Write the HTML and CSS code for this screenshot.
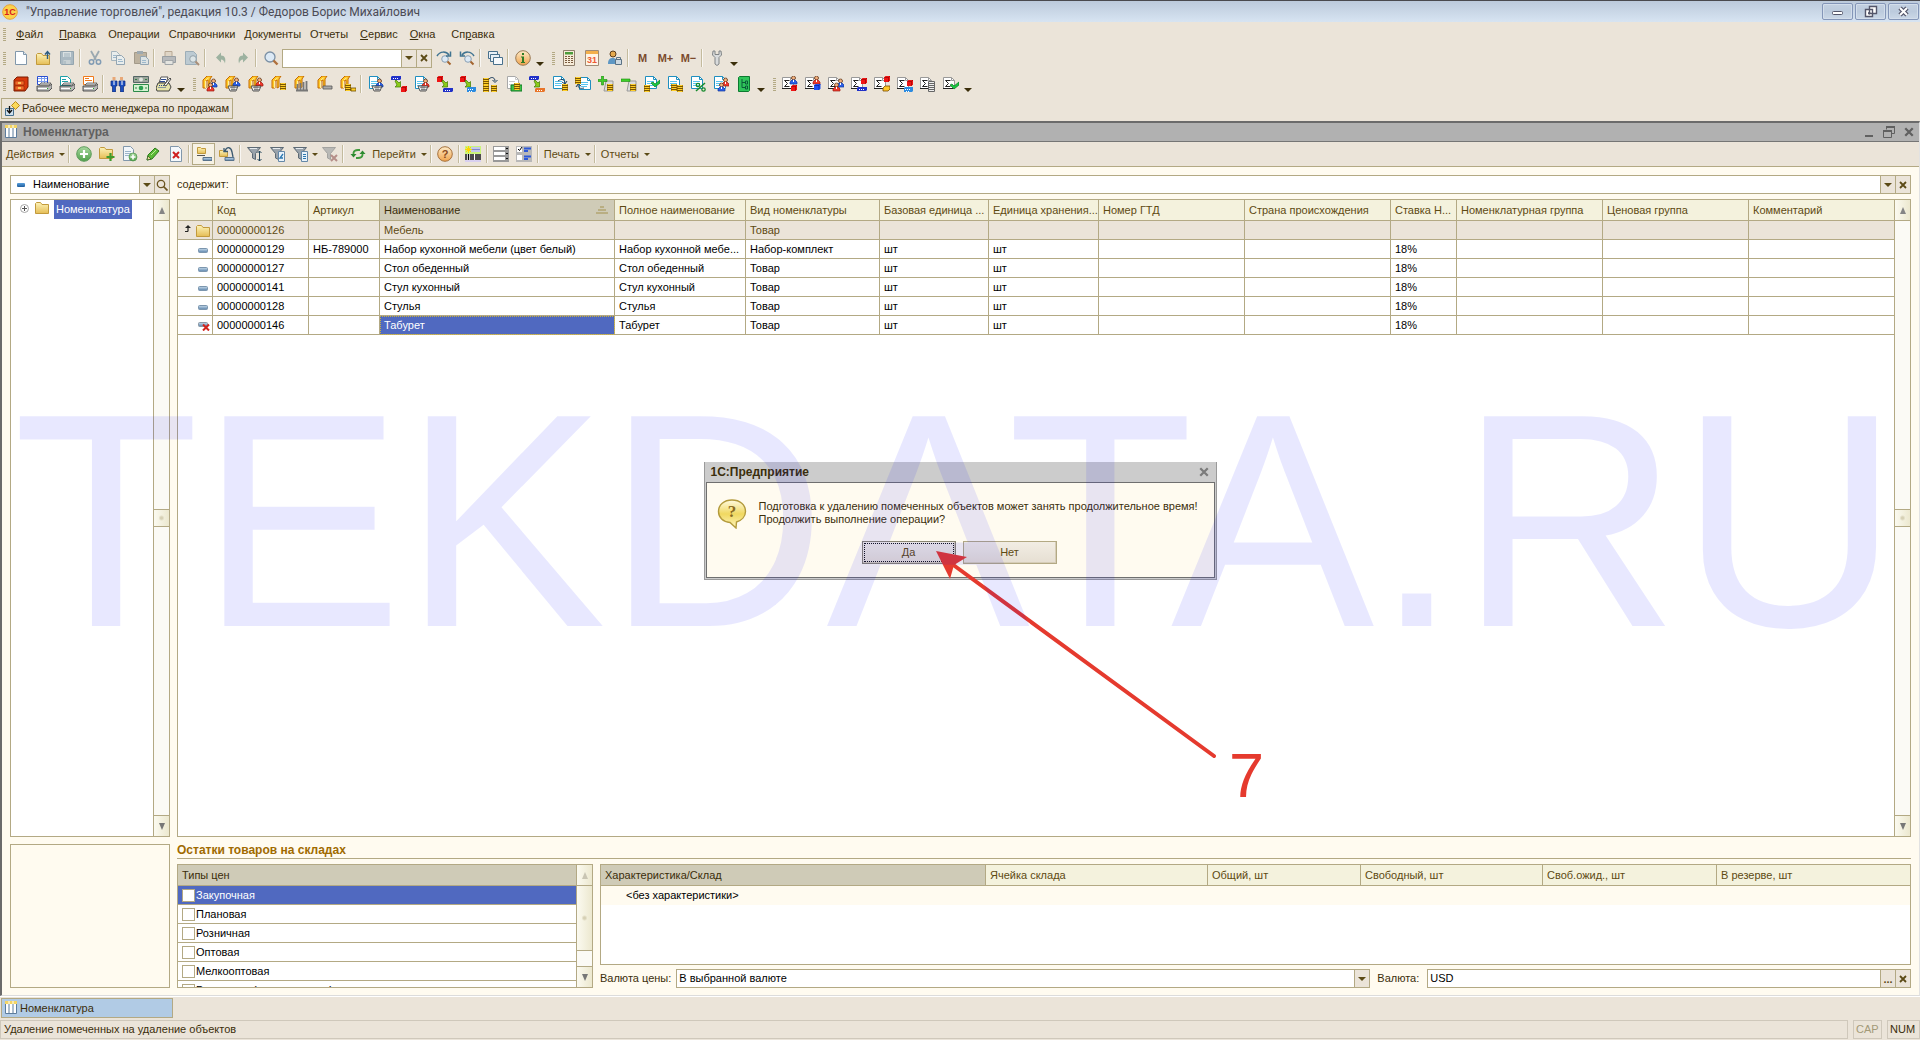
FILE: index.html
```html
<!DOCTYPE html>
<html lang="ru">
<head>
<meta charset="utf-8">
<title>Управление торговлей, редакция 10.3</title>
<link rel="stylesheet" href="styles.css">
</head>
<body>
<svg class="defs" aria-hidden="true">
<defs>
<linearGradient id="gFolder" x1="0" y1="0" x2="0" y2="1"><stop offset="0" stop-color="#fdf3b8"/><stop offset="1" stop-color="#e5bd55"/></linearGradient>
<linearGradient id="gGreen" x1="0" y1="0" x2="0" y2="1"><stop offset="0" stop-color="#a9d9a0"/><stop offset="1" stop-color="#4fa04b"/></linearGradient>
<linearGradient id="gOrange" x1="0" y1="0" x2="0" y2="1"><stop offset="0" stop-color="#fdebc8"/><stop offset="1" stop-color="#f0a24c"/></linearGradient>
<linearGradient id="gBar" x1="0" y1="0" x2="0" y2="1"><stop offset="0" stop-color="#c8dcec"/><stop offset="1" stop-color="#5b83ab"/></linearGradient>
<linearGradient id="gYellow" x1="0" y1="0" x2="0" y2="1"><stop offset="0" stop-color="#fffbe0"/><stop offset=".5" stop-color="#f0d860"/><stop offset="1" stop-color="#fff6c0"/></linearGradient>
<g id="pDoc"><path d="M1.5 .5h8l3 3v9h-11z" fill="#fff" stroke="#1f8fc0"/><path d="M9.500 .5v3h3" fill="none" stroke="#1f8fc0"/><path d="M3 5.500h7M3 7.500h7M3 9.500h6" stroke="#58c4ee"/></g>
<g id="pGDoc"><path d="M1.500 .5h8l3 3v9h-11z" fill="#fff" stroke="#a9a9a9"/><path d="M9.500 .5v3h3M3 5.500h6M3 8.500h6" fill="none" stroke="#c9c9c9"/></g>
<g id="pSum"><path d="M.5 1.500h8l3 3v8h-11z" fill="#fff" stroke="#999"/><path d="M8.500 1.500v3h3" fill="none" stroke="#999"/><path d="M0 12.500h10" stroke="#222"/><path d="M7.500 4.500h-5l3 3-3 3h5" fill="none" stroke="#222"/></g>
<g id="pCoins"><path d="M0 1h6v7h-6z" fill="#7a5600"/><path d="M.5 1.500h5M.5 3.500h5M.5 5.500h5M.5 7.500h5" stroke="#ffcf2a" stroke-width="1.200"/></g>
<g id="pManB"><path d="M2.500 0h2v1h1v2h-1v1h-2v-1h-1v-2h1z" fill="#f2b07c" stroke="#5c3317" stroke-width=".6"/><path d="M0 8v-2l2-2h3l2 2v2z" fill="#2a5fe8" stroke="#123a9c" stroke-width=".7"/><path d="M3.500 4v2" stroke="#fff"/></g>
<g id="pManR"><path d="M2.500 0h2v1h1v2h-1v1h-2v-1h-1v-2h1z" fill="#f2b07c" stroke="#5c3317" stroke-width=".6"/><path d="M0 8v-2l2-2h3l2 2v2z" fill="#ee3a2c" stroke="#9c1a12" stroke-width=".7"/><path d="M3.500 4v2" stroke="#fff"/></g>
<g id="pArch"><path d="M1 12V4l4-4h5l-2 3v8l-2 1V4l-2 1v7z" fill="#ffc928" stroke="#c56a00"/><path d="M3.500 12V5M6.500 2L4 4" stroke="#fff0a0" fill="none"/></g>
<g id="pBasket"><path d="M0 0h10l-2 5h-6z" fill="#efefef" stroke="#333" stroke-width=".8"/><path d="M2 1.500h7M3 3.500h5M4 0v5M6 0v5" stroke="#555" stroke-width=".6"/></g>
<g id="pCubeR"><path d="M0 1.500l1.500-1.500h4.500v4.500l-1.500 1.500h-4.500z" fill="#f01414"/><path d="M4.500 6V1.500H0M4.500 1.500L6 0" stroke="#8e0000" stroke-width=".6" fill="none"/></g>
<g id="pCubeB"><path d="M0 1.500l1.500-1.500h5v4.500l-1.500 1.500h-5z" fill="#1f50f0"/><path d="M5 6V1.500H0M5 1.500L6.500 0" stroke="#001a8e" stroke-width=".6" fill="none"/></g>
<g id="pBarB"><path d="M0 1l1-1h9v3l-1 1h-9z" fill="#2030c8"/><path d="M2 2.500h1M4 2.500h1M6 2.500h1" stroke="#fff"/></g>
<g id="pBarL"><path d="M0 1l1-1h8v4l-1 1h-8z" fill="#2c8be0"/><path d="M1 2.500h6M2 4.500h4" stroke="#fff" stroke-dasharray="1 1"/></g>
<g id="pBarO"><path d="M0 1l1-1h9v3l-1 1h-9z" fill="#e8752a"/><path d="M2 2.500h1M4 2.500h1M6 2.500h1" stroke="#fff"/></g>
<g id="pArrow"><path d="M0 1l1-1 3 3 1.500-1.500v5.500h-5.500l2-2z" fill="#8ccc1a" stroke="#3d7a00" stroke-width=".7"/></g>
<g id="pPrinter"><path d="M2 2l2-2h10l-2 2z" fill="#ddd" stroke="#444" stroke-width=".7"/><path d="M0 3h12l3-2v4l-3 3h-12z" fill="#b8b8b8" stroke="#333" stroke-width=".8"/><path d="M1 5.500h10" stroke="#fff"/><path d="M10 5.500h1" stroke="#2a2"/></g>
<g id="pCheck"><path d="M0 3l2-1 2 2 5-4v3l-5 4z" fill="#18c840" stroke="#0a7a22" stroke-width=".7"/></g>
<g id="pLens"><circle cx="4" cy="4" r="3.300" fill="#dceaf6" stroke="#8aa0b4"/><path d="M6.500 6.500l3 3" stroke="#a3642f" stroke-width="2"/></g>
<g id="pFolder"><path d="M.5 2.500l1-1h4l1.500 2h6.500v9h-13z" fill="url(#gFolder)" stroke="#c29a3c"/></g>
<g id="pFunnel"><path d="M.5 1.500h13l-5 6v6l-3-1.500v-4.500z" fill="#9aa3ab" stroke="#5d6a75"/><path d="M3 2.500h7" stroke="#e6ebef"/></g>
<g id="pPlus"><circle cx="4" cy="4" r="4" fill="url(#gGreen)" stroke="#4a9347" stroke-width=".7"/><path d="M4 1.500v5M1.500 4h5" stroke="#fff" stroke-width="1.600"/></g>
<g id="pX"><path d="M1 1l6 6M7 1l-6 6" stroke="#cf1f1f" stroke-width="2"/></g>
</defs>
<symbol id="logo" viewBox="0 0 16 16"><circle cx="8" cy="8" r="7.300" fill="#fbd24a" stroke="#e8a33c"/><text x="8" y="11" text-anchor="middle" font-size="9" font-weight="700" fill="#d8201c">1С</text></symbol>
<symbol id="new" viewBox="0 0 16 16"><path d="M2.500 1.500h8l3 3v10h-11z" fill="#fdfeff" stroke="#8197ab"/><path d="M10.500 1.500v3h3" fill="#dbe6f0" stroke="#8197ab"/></symbol>
<symbol id="open" viewBox="0 0 16 16"><use href="#pFolder" y="2"/><path d="M11.500 9V2M9 4.500L11.500 1.500 14 4.500" fill="none" stroke="#2d5d80" stroke-width="1.400"/></symbol>
<symbol id="save" viewBox="0 0 16 16"><path d="M1.500 1.500h13v13h-12l-1-1z" fill="#aab9c2" stroke="#94a5af"/><path d="M4 2h8v5H4z" fill="#d9e0e2"/><path d="M4.500 10h7v4h-7z" fill="#c8d1d4"/><path d="M5 4h6M5 6h6M6 11v3" stroke="#9eb0ba"/></symbol>
<symbol id="cut" viewBox="0 0 16 16"><path d="M4 1l5 9M12 1l-5 9" stroke="#9ba8b0" stroke-width="1.800"/><circle cx="4.500" cy="12" r="2.200" fill="none" stroke="#829cb4" stroke-width="1.500"/><circle cx="11.500" cy="12" r="2.200" fill="none" stroke="#829cb4" stroke-width="1.500"/></symbol>
<symbol id="copy" viewBox="0 0 16 16"><path d="M1.500 1.500h5l3 3v6h-8z" fill="#e9edec" stroke="#a5b4bd"/><path d="M6.500 5.500h5l3 3v6h-8z" fill="#e9edec" stroke="#93a5b2"/><path d="M3 5.500h3M3 7.500h3M8 9.500h4M8 11.500h5" stroke="#9db8cc"/></symbol>
<symbol id="paste" viewBox="0 0 16 16"><path d="M1.500 2.500h12v11h-12z" fill="#bdb29f" stroke="#a39a8a"/><path d="M4 1h6v3H4z" fill="#9ea9b0"/><path d="M7.500 6.500h5l3 3v5h-8z" fill="#dde3e4" stroke="#93a5b2"/><path d="M9 10.500h4M9 12.500h4" stroke="#9db8cc"/></symbol>
<symbol id="print" viewBox="0 0 16 16"><path d="M4 1.500h7v5H4z" fill="#dfd5c6" stroke="#b8a894"/><path d="M1.500 6.500h13v6h-13z" fill="#b7b9bb" stroke="#999fa3"/><path d="M4 10.500h8v4H4z" fill="#e4e4e0" stroke="#a0a5a8"/></symbol>
<symbol id="preview" viewBox="0 0 16 16"><path d="M1.500 1.500h8l3 3v10h-11z" fill="#bccad2" stroke="#9cadb7"/><circle cx="9" cy="9" r="3.300" fill="#dce4e6" stroke="#94a2aa"/><path d="M11.500 11.500l3.500 3.500" stroke="#a98e78" stroke-width="2"/></symbol>
<symbol id="undo" viewBox="0 0 16 16"><path d="M4 7.500l5-5v3c4 0 5 3 4 8-1-3-2-4-4-4v3z" fill="#9db2a0"/></symbol>
<symbol id="redo" viewBox="0 0 16 16"><path d="M13 7.500l-5-5v3c-4 0-5 3-4 8 1-3 2-4 4-4v3z" fill="#9db2a0"/></symbol>
<symbol id="find" viewBox="0 0 16 16"><circle cx="7" cy="7" r="5" fill="#dce9f5" stroke="#7b90a5" stroke-width="1.300"/><path d="M10.500 10.500l4 4" stroke="#b0703c" stroke-width="2.400"/></symbol>
<symbol id="findnext" viewBox="0 0 16 16"><use href="#pLens" x="5" y="5"/><path d="M1 6c3-5 9-5 12-1M14.500 1.500v4.500h-4.500" fill="none" stroke="#3f7391" stroke-width="1.500"/></symbol>
<symbol id="findprev" viewBox="0 0 16 16"><use href="#pLens" x="5" y="5"/><path d="M15 6c-3-5-9-5-12-1M1.500 1.500v4.500h4.500" fill="none" stroke="#3f7391" stroke-width="1.500"/></symbol>
<symbol id="windows" viewBox="0 0 16 16"><path d="M1.500 1.500h9v7h-9z" fill="#e9f0f6" stroke="#48708c"/><path d="M3.500 4.500h9v7h-9z" fill="#e9f0f6" stroke="#48708c"/><path d="M6.500 7.500h9v7h-9z" fill="#f6f9fc" stroke="#48708c"/></symbol>
<symbol id="info" viewBox="0 0 16 16"><circle cx="8" cy="8" r="7.300" fill="url(#gOrange)" stroke="#9a7a54"/><path d="M7 3h2v2H7zM6 6.500h3V12h1v1H6v-1h1V7.500H6z" fill="#2f7d26"/></symbol>
<symbol id="calc" viewBox="0 0 16 16"><path d="M2.500 .5h11v15h-11z" fill="#f7ecd9" stroke="#8f7f6c"/><path d="M4 2h8v2.500H4z" fill="#4c9c3c"/><path d="M4 6.500h8M4 8.500h8M4 10.500h8M4 12.500h8" stroke="#7a5b40" stroke-dasharray="2 1"/></symbol>
<symbol id="calendar" viewBox="0 0 16 16"><path d="M1.500 .5h13v15h-13z" fill="#fff5e6" stroke="#a08b76"/><path d="M2 1h12v3H2z" fill="#f4b04c"/><text x="8" y="13" text-anchor="middle" font-size="9" font-weight="700" fill="#ec5a33">31</text></symbol>
<symbol id="userlock" viewBox="0 0 16 16"><circle cx="6" cy="4" r="3" fill="#e5a94d" stroke="#5a3b1a"/><path d="M1 14c0-5 2-6 5-6s4 2 4 6z" fill="#5e97c4"/><path d="M8.500 9.500h6v5h-6z" fill="#cdd9e2" stroke="#5b7284"/><path d="M9.500 9V7.500h4V9" fill="none" stroke="#5b7284"/></symbol>
<symbol id="wrench" viewBox="0 0 16 16"><path d="M4 1L3.500 5l2.500 2.500V14l2 1.500 2-1.500V7.500L12.500 5 12 1l-2 0v3.500H6V1z" fill="#d9dbdc" stroke="#808486"/></symbol>
<symbol id="cabinet" viewBox="0 0 16 16"><path d="M1 4l3-3h11v10l-3 4H1z" fill="#d8390c" stroke="#7a1c00"/><path d="M2 5h9v4H2zM2 10h9v4H2z" fill="#f2682a" stroke="#8a2500" stroke-width=".6"/><path d="M5 7h3M5 12h3" stroke="#ffe070" stroke-width="1.500"/></symbol>
<symbol id="prn1" viewBox="0 0 16 16"><path d="M1.500 .5h10v8h-10z" fill="#fff" stroke="#2a4fd0"/><path d="M2 2.500h9M2 5.500h9M5.500 1v7M8.500 1v7" stroke="#7a9cf0"/><use href="#pPrinter" x="1" y="7"/></symbol>
<symbol id="prn2" viewBox="0 0 16 16"><path d="M1.500 .5h7l3 3v6h-10z" fill="#fff" stroke="#1ba0a8"/><path d="M3 3.500h4M3 5.500h6" stroke="#1ba0a8"/><use href="#pPrinter" x="1" y="7"/></symbol>
<symbol id="prn3" viewBox="0 0 16 16"><path d="M1.500 .5h10v8h-10z" fill="#fff" stroke="#f07a1c"/><path d="M3 2.500h4M3 4.500h7" stroke="#f07a1c"/><use href="#pPrinter" x="1" y="7"/></symbol>
<symbol id="men" viewBox="0 0 16 16"><path d="M2.500 1h3v3h-3zM10 1h3v3h-3z" fill="#e8a878"/><path d="M1 5h6v5H5.500v6h-3v-6H1zM9 5h6v5h-1.500v6h-3v-6H9z" fill="#1c4fc0" stroke="#0c2a78" stroke-width=".7"/><path d="M4 5v4M12 5v4" stroke="#fff"/></symbol>
<symbol id="money" viewBox="0 0 16 16"><path d="M.5 .5h15v6H.5z" fill="#9aa49a" stroke="#566"/><path d="M.5 8.500h15v7H.5z" fill="#d6f2d2" stroke="#2c8a4a"/><circle cx="8" cy="12" r="2.300" fill="#2ba050"/><circle cx="8" cy="3.500" r="2" fill="#dfe5df"/><path d="M2 12h2M12 12h2M2 3.500h2M12 3.500h2" stroke="#367a46"/></symbol>
<symbol id="typewriter" viewBox="0 0 16 16"><path d="M5 1h7l-2 6H3z" fill="#fff" stroke="#555"/><path d="M5 3.500h5M4 5.500h5" stroke="#2a4890"/><path d="M2 7h11l2 4-2 4H1l-1-3z" fill="#e5e2a8" stroke="#444"/><path d="M3 9.500h8M2.500 11.500h8" stroke="#2a4890" stroke-dasharray="1 1"/><path d="M8 9l6-7 1 1-5 7z" fill="#fff" stroke="#222" stroke-width=".8"/></symbol>
<symbol id="a1" viewBox="0 0 16 16"><use href="#pArch"/><use href="#pManB" x="8" y="3"/><use href="#pManR" x="5" y="7"/></symbol>
<symbol id="a2" viewBox="0 0 16 16"><use href="#pArch"/><use href="#pManB" x="8" y="2"/><use href="#pBasket" x="3" y="10"/></symbol>
<symbol id="a3" viewBox="0 0 16 16"><use href="#pArch"/><use href="#pManR" x="8" y="2"/><use href="#pBasket" x="3" y="10"/></symbol>
<symbol id="a4" viewBox="0 0 16 16"><use href="#pArch"/><use href="#pCoins" x="9" y="6"/></symbol>
<symbol id="a5" viewBox="0 0 16 16"><use href="#pArch"/><path d="M3.500 14V8M6.500 14V7M9.500 14V6M12.500 14V5M2 14.500h12" stroke="#777" stroke-width="1.800"/></symbol>
<symbol id="a6" viewBox="0 0 16 16"><use href="#pArch"/><path d="M6 10h9v3H6z" fill="#aaa" stroke="#555" stroke-width=".8"/></symbol>
<symbol id="a7" viewBox="0 0 16 16"><use href="#pArch"/><use href="#pCoins" x="5" y="7"/><path d="M11 12h5v3h-5z" fill="#ffcf2a" stroke="#6b4a00" stroke-width=".8"/></symbol>
<symbol id="d1" viewBox="0 0 16 16"><use href="#pDoc"/><use href="#pManB" x="8" y="3"/><use href="#pBasket" x="4" y="10"/></symbol>
<symbol id="d2" viewBox="0 0 16 16"><use href="#pBarB"/><use href="#pArrow" x="4" y="4"/><use href="#pCubeR" x="10" y="10"/></symbol>
<symbol id="d3" viewBox="0 0 16 16"><use href="#pDoc"/><use href="#pManR" x="8" y="3"/><use href="#pBasket" x="4" y="10"/></symbol>
<symbol id="d4" viewBox="0 0 16 16"><use href="#pCubeR"/><use href="#pArrow" x="5" y="4"/><use href="#pBarB" x="6" y="12"/></symbol>
<symbol id="d5" viewBox="0 0 16 16"><use href="#pCubeR"/><use href="#pArrow" x="5" y="4"/><use href="#pBarL" x="7" y="11"/></symbol>
<symbol id="d6" viewBox="0 0 16 16"><use href="#pCoins" y="1"/><use href="#pCoins" y="8"/><use href="#pCoins" x="8" y="8"/><path d="M6 3c3-3 6-1 6 2M9.500 4l2.500 2.500L14.500 4" fill="none" stroke="#1c3c5c"/></symbol>
<symbol id="d7" viewBox="0 0 16 16"><use href="#pGDoc"/><path d="M5 9h11v6H5z" fill="#3fc04a" stroke="#117a22"/><use href="#pCoins" x="8" y="6"/></symbol>
<symbol id="d8" viewBox="0 0 16 16"><use href="#pBarB"/><use href="#pArrow" x="5" y="4"/><use href="#pBarO" x="6" y="12"/></symbol>
<symbol id="d9" viewBox="0 0 16 16"><use href="#pDoc"/><path d="M6 5c4-3 7-1 7 2M10 6l3 2 2-3" fill="none" stroke="#1c3c5c"/><use href="#pCoins" x="10" y="7"/></symbol>
<symbol id="d10" viewBox="0 0 16 16"><use href="#pDoc" x="3" y="1"/><use href="#pCoins"/><path d="M3 9c0 3 2 4 6 3M1 11l2-3 3 2" fill="none" stroke="#1c3c5c"/></symbol>
<symbol id="d11" viewBox="0 0 16 16"><path d="M8 5h7v10H6z" fill="#ddd" stroke="#999"/><use href="#pCoins" x="9" y="7"/><path d="M3.500 0h2v3.500H9v2H5.500V9h-2V5.500H0v-2h3.500z" fill="#3fcf2a" stroke="#178a0c" stroke-width=".6"/></symbol>
<symbol id="d12" viewBox="0 0 16 16"><path d="M8 5h7v10H6z" fill="#ddd" stroke="#999"/><use href="#pCoins" x="9" y="7"/><path d="M0 3h9v2.500H0z" fill="#3fcf2a" stroke="#178a0c" stroke-width=".6"/></symbol>
<symbol id="d13" viewBox="0 0 16 16"><use href="#pDoc"/><use href="#pCheck" x="7" y="4"/><use href="#pCoins" y="8"/></symbol>
<symbol id="d14" viewBox="0 0 16 16"><use href="#pDoc"/><use href="#pCoins" x="4" y="7"/><use href="#pCoins" x="10" y="8"/></symbol>
<symbol id="d15" viewBox="0 0 16 16"><use href="#pDoc"/><path d="M6 15l9-8" stroke="#178a2c" stroke-width="1.500"/><circle cx="8" cy="9" r="1.700" fill="none" stroke="#178a2c" stroke-width="1.300"/><circle cx="13.500" cy="13.500" r="1.700" fill="none" stroke="#178a2c" stroke-width="1.300"/></symbol>
<symbol id="d16" viewBox="0 0 16 16"><use href="#pDoc"/><use href="#pManR" x="9" y="2"/><use href="#pManB" x="5" y="7"/></symbol>
<symbol id="d17" viewBox="0 0 16 16"><path d="M2.500 1.500l1-1h10v14l-1 1h-10z" fill="#2fc45a" stroke="#0c7a30"/><path d="M6 3v8.500h3M6 6.500h3M9.500 5h2v3h-2zM9.500 10h2v3h-2z" fill="none" stroke="#0a5c38"/></symbol>
<symbol id="s1" viewBox="0 0 16 16"><use href="#pSum"/><use href="#pManB" x="8"/><use href="#pCubeR" x="9" y="9"/></symbol>
<symbol id="s2" viewBox="0 0 16 16"><use href="#pSum"/><use href="#pManR" x="8"/><use href="#pCubeB" x="9" y="8"/></symbol>
<symbol id="s3" viewBox="0 0 16 16"><use href="#pSum"/><use href="#pManB" x="9" y="3"/><use href="#pManR" x="5" y="7"/></symbol>
<symbol id="s4" viewBox="0 0 16 16"><use href="#pSum"/><use href="#pCubeR" x="10" y="2"/><use href="#pBarB" x="6" y="11"/></symbol>
<symbol id="s5" viewBox="0 0 16 16"><use href="#pSum"/><use href="#pCubeR" x="10"/><path d="M9 12l2-2h5v3l-2 2H9z" fill="#ffc928" stroke="#7a4a00" stroke-width=".8"/></symbol>
<symbol id="s6" viewBox="0 0 16 16"><use href="#pSum"/><use href="#pCubeR" x="10" y="4"/><use href="#pBarL" x="7" y="11"/></symbol>
<symbol id="s7" viewBox="0 0 16 16"><use href="#pSum"/><path d="M8.500 5.500h6v10h-6z" fill="#eee" stroke="#666"/><path d="M8 7.500h7M8 9.500h7M8 11.500h7M8 13.500h7" stroke="#666"/></symbol>
<symbol id="s8" viewBox="0 0 16 16"><use href="#pSum"/><use href="#pCheck" x="7" y="6"/></symbol>
<symbol id="workplace" viewBox="0 0 16 16"><path d="M1.500 7.500h8v7h-8z" fill="#cfe0ee" stroke="#47708f"/><path d="M5.500 5v6M3 9l2.500 3L8 9" fill="none" stroke="#111" stroke-width="1.300"/><path d="M11.500 .5l4 4-4 4-4-4z" fill="#fbd95a" stroke="#b98a1c"/></symbol>
<symbol id="grid" viewBox="0 0 16 16"><path d="M2.500 2.500h11v11h-11z" fill="#fff" stroke="#5c7c9c"/><path d="M6 2v11.500M10 2v11.500" stroke="#5c7c9c"/><path d="M2 1h12v3H2z" fill="#f3d464"/><path d="M6 1v3M10 1v3" stroke="#fff"/></symbol>
<symbol id="add" viewBox="0 0 16 16"><circle cx="8" cy="8" r="7.300" fill="url(#gGreen)" stroke="#5f9c5c"/><path d="M8 4v8M4 8h8" stroke="#fff" stroke-width="2.200"/></symbol>
<symbol id="addfolder" viewBox="0 0 16 16"><use href="#pFolder"/><path d="M11.500 7v8M7.500 11h8" stroke="#3f9a2c" stroke-width="2.200"/></symbol>
<symbol id="adddoc" viewBox="0 0 16 16"><path d="M1.500 .5h7l3 3v11h-10z" fill="#f2f6fa" stroke="#8197ab"/><path d="M3 5.500h6M3 7.500h6M3 9.500h4" stroke="#9bb4c9"/><use href="#pPlus" x="7" y="7"/></symbol>
<symbol id="edit" viewBox="0 0 16 16"><path d="M2 14l1-5 7-7 4 3-7 8z" fill="#5cbb36" stroke="#2c7a1c"/><path d="M2 14l1-4 3 3z" fill="#f0d8a0" stroke="#2c5a1c" stroke-width=".7"/><path d="M6 9l5-5" stroke="#bdeb9c"/></symbol>
<symbol id="delete" viewBox="0 0 16 16"><path d="M2.500 .5h8l3 3v12h-11z" fill="#f4f8fc" stroke="#8197ab"/><use href="#pX" x="4" y="5"/></symbol>
<symbol id="hier" viewBox="0 0 16 16"><path d="M1.500 1.500h3l1 1h4v5h-8z" fill="url(#gFolder)" stroke="#c29a3c"/><path d="M1 9.500h8" stroke="#555"/><path d="M7 14.500h9v-3H7z" fill="url(#gBar)" stroke="#58738c"/></symbol>
<symbol id="move" viewBox="0 0 16 16"><path d="M.5 4.500h3l1 1h4v5h-8z" fill="url(#gFolder)" stroke="#c29a3c"/><path d="M6 5c2-5 6-4 7 1l1 5M5 2v3.500h4" fill="none" stroke="#3c5a70" stroke-width="1.300"/><path d="M6 11.500h9v3H6z" fill="url(#gBar)" stroke="#58738c"/></symbol>
<symbol id="f1" viewBox="0 0 16 16"><use href="#pFunnel"/><path d="M12.500 5v10M10.500 7l2-2 2 2M10.500 13l2 2 2-2" fill="none" stroke="#24475c"/></symbol>
<symbol id="f2" viewBox="0 0 16 16"><use href="#pFunnel"/><path d="M8.500 5.500h6v10h-6z" fill="#e9f2fa" stroke="#6488a8"/><path d="M13 8l-3 4h3" fill="none" stroke="#2c78b0" stroke-width="1.300"/></symbol>
<symbol id="f3" viewBox="0 0 16 16"><use href="#pFunnel"/><path d="M8.500 5.500h6v10h-6z" fill="#e9f2fa" stroke="#6488a8"/><path d="M10 8.500h3M10 10.500h3M10 12.500h3" stroke="#2c78b0"/></symbol>
<symbol id="f4" viewBox="0 0 16 16"><path d="M.5 1.500h13l-5 6v6l-3-1.500v-4.500z" fill="#b9b9b6" stroke="#a3a3a0"/><path d="M9 9l6 6M15 9l-6 6" stroke="#b58e88" stroke-width="2"/></symbol>
<symbol id="refresh" viewBox="0 0 16 16"><path d="M3.500 9V7Q4 4 8 4h2M12.500 7v2Q12 12 8 12H6" fill="none" stroke="#3f9a3c" stroke-width="1.800"/><path d="M.5 8h6l-3 3.500zM15.500 8h-6l3-3.500z" fill="#2c8a30"/></symbol>
<symbol id="help" viewBox="0 0 16 16"><circle cx="8" cy="8" r="7.300" fill="url(#gOrange)" stroke="#a5713c"/><text x="8" y="12" text-anchor="middle" font-size="11" font-weight="700" fill="#8a4a1c">?</text></symbol>
<symbol id="barcode" viewBox="0 0 16 16"><path d="M0 0h16v16H0z" fill="#c9f57a"/><path d="M6 1h9v5H6z" fill="#c4c8ea"/><path d="M7 3.500h8" stroke="#8088cc"/><path d="M3.500 0v7M0 3.500h7M1 1l5 5M6 1l-5 5" stroke="#ffd400"/><path d="M0 8h16v6H0z" fill="#fff"/><path d="M1 8v6M3.500 8v6M6 8v6M8 8v6M11 8v6M13 8v6M15 8v6" stroke="#000" stroke-width="1.400"/><path d="M0 14h16v2H0z" fill="#d8d0f0"/></symbol>
<symbol id="rows" viewBox="0 0 16 16"><path d="M0 0h16v16H0z" fill="#999"/><path d="M1 1h11v3H1zM1 6h11v3H1zM1 11h11v3H1z" fill="#fff"/><path d="M13 2.500h2M13 7.500h2M13 12.500h2" stroke="#111"/></symbol>
<symbol id="checks" viewBox="0 0 16 16"><path d="M0 0h16v16H0z" fill="#b8b8b8"/><path d="M1 1h5v5H1zM1 9h5v5H1z" fill="#fff"/><path d="M2 3l1.500 1.500L6 1" stroke="#000" fill="none"/><path d="M8 2.500h7M8 5h4M8 10.500h7M8 13h4" stroke="#2c58d8" stroke-width="2"/></symbol>
<symbol id="folder" viewBox="0 0 14 14"><use href="#pFolder"/></symbol>
<symbol id="item" viewBox="0 0 10 5"><rect x=".5" y=".5" width="9" height="4" rx="1" fill="url(#gBar)" stroke="#7c96ae"/></symbol>
<symbol id="itemdel" viewBox="0 0 14 10"><rect x="1.500" y="1.500" width="9" height="4" rx="1" fill="url(#gBar)" stroke="#8a98a4"/><path d="M6 3.500l6 6M12 3.500l-6 6" stroke="#d2231c" stroke-width="2"/></symbol>
<symbol id="up" viewBox="0 0 6 7"><path d="M3 6.500V2M0 6.500h3" stroke="#222" stroke-width="1.200"/><path d="M0 3l3-3 3 3z" fill="#222"/></symbol>
<symbol id="lens" viewBox="0 0 12 12"><circle cx="5" cy="5" r="3.700" fill="none" stroke="#6b5420" stroke-width="1.300"/><path d="M7.500 7.500l4 4" stroke="#6b5420" stroke-width="1.700"/></symbol>
<symbol id="cross" viewBox="0 0 8 8"><path d="M1 1l6 6M7 1l-6 6" stroke="currentColor" stroke-width="1.800"/></symbol>
<symbol id="plusnode" viewBox="0 0 9 9"><circle cx="4.500" cy="4.500" r="4" fill="#fff" stroke="#a5a5a5"/><path d="M4.500 2v5M2 4.500h5" stroke="#555"/></symbol>
<symbol id="restore" viewBox="0 0 12 12"><path d="M3.500 3.500v-3h8v7h-3M.5 4.500h8v7h-8z" fill="none" stroke="currentColor"/><path d="M3 1h9M0 5h9" stroke="currentColor" stroke-width="2"/></symbol>
<symbol id="question" viewBox="0 0 30 30"><path d="M15 1c8 0 13.500 5 13.500 11.500 0 5-4 9-9 10.500l-.5 6-6-5.500C6 23 1.500 18.500 1.500 12.500 1.500 6 7 1 15 1z" fill="url(#gYellow)" stroke="#b39a3c" stroke-width="1.400"/><text x="15" y="18" text-anchor="middle" font-family="Liberation Serif, serif" font-size="17" font-weight="700" fill="#8a6a20">?</text></symbol>
<symbol id="sort" viewBox="0 0 12 8"><path d="M4 0h4v2H4zM2 3h8v2H2zM0 6h12v2H0z" fill="#b9ae82"/></symbol>
</svg>

<header class="titlebar">
  <svg class="ic"><use href="#logo"/></svg>
  <h1>"Управление торговлей", редакция 10.3 / Федоров Борис Михайлович</h1>
  <button class="winbtn" aria-label="Свернуть"><svg class="wi"><rect x="1.500" y="6.500" width="10" height="3" rx="1" fill="#fff" stroke="#54566a"/></svg></button>
  <button class="winbtn" aria-label="Развернуть"><svg class="wi"><path d="M5.500 1.500h7v7h-7zM1.500 4.500h7v7h-7z" fill="#fff" stroke="#54566a" stroke-width="1.400"/><path d="M4.500 7.500h1.500v1.500h-1.500z" fill="#54566a" stroke="#54566a"/></svg></button>
  <button class="winbtn" aria-label="Закрыть"><svg class="wi"><path d="M3 3l7 7M10 3l-7 7" stroke="#54566a" stroke-width="4.500"/><path d="M3 3l7 7M10 3l-7 7" stroke="#fff" stroke-width="2"/></svg></button>
</header>

<nav class="menubar">
  <i class="grip"></i>
  <a href="#"><u>Ф</u>айл</a><a href="#"><u>П</u>равка</a><a href="#">Операции</a><a href="#">Справочники</a><a href="#">Документы</a><a href="#">Отчеты</a><a href="#"><u>С</u>ервис</a><a href="#"><u>О</u>кна</a><a href="#">Сп<u>р</u>авка</a>
</nav>

<div class="toolbar">
  <i class="grip"></i>
  <button class="tb" aria-label="Новый"><svg class="ic"><use href="#new"/></svg></button><button class="tb" aria-label="Открыть"><svg class="ic"><use href="#open"/></svg></button><button class="tb" aria-label="Сохранить"><svg class="ic"><use href="#save"/></svg></button>
  <i class="sep"></i>
  <button class="tb" aria-label="Вырезать"><svg class="ic"><use href="#cut"/></svg></button><button class="tb" aria-label="Копировать"><svg class="ic"><use href="#copy"/></svg></button><button class="tb" aria-label="Вставить"><svg class="ic"><use href="#paste"/></svg></button>
  <i class="sep"></i>
  <button class="tb" aria-label="Печать"><svg class="ic"><use href="#print"/></svg></button><button class="tb" aria-label="Просмотр"><svg class="ic"><use href="#preview"/></svg></button>
  <i class="sep"></i>
  <button class="tb" aria-label="Отменить"><svg class="ic"><use href="#undo"/></svg></button><button class="tb" aria-label="Повторить"><svg class="ic"><use href="#redo"/></svg></button>
  <i class="sep"></i>
  <button class="tb" aria-label="Найти"><svg class="ic"><use href="#find"/></svg></button>
  <div class="field quick"><input aria-label="Строка поиска"><button class="fb" aria-label="Список"><i class="tri"></i></button><button class="fb" aria-label="Очистить"><svg class="x8"><use href="#cross"/></svg></button></div>
  <button class="tb" aria-label="Найти далее"><svg class="ic"><use href="#findnext"/></svg></button><button class="tb" aria-label="Найти ранее"><svg class="ic"><use href="#findprev"/></svg></button>
  <i class="sep"></i>
  <button class="tb" aria-label="Окна"><svg class="ic"><use href="#windows"/></svg></button>
  <i class="sep"></i>
  <button class="tb" aria-label="Справка"><svg class="ic"><use href="#info"/></svg></button>
  <button class="more" aria-label="Еще"><i class="tri"></i></button>
  <i class="grip mid"></i>
  <button class="tb" aria-label="Калькулятор"><svg class="ic"><use href="#calc"/></svg></button><button class="tb" aria-label="Календарь"><svg class="ic"><use href="#calendar"/></svg></button><button class="tb" aria-label="Пользователь"><svg class="ic"><use href="#userlock"/></svg></button>
  <i class="sep"></i>
  <button class="tb mem">M</button><button class="tb mem">M+</button><button class="tb mem">M−</button>
  <i class="sep"></i>
  <button class="tb" aria-label="Настройка"><svg class="ic"><use href="#wrench"/></svg></button>
  <button class="more" aria-label="Еще"><i class="tri"></i></button>
</div>

<div class="toolbar">
  <i class="grip"></i>
  <button class="tb" aria-label="Номенклатура"><svg class="ic"><use href="#cabinet"/></svg></button><button class="tb" aria-label="Отчет 1"><svg class="ic"><use href="#prn1"/></svg></button><button class="tb" aria-label="Отчет 2"><svg class="ic"><use href="#prn2"/></svg></button><button class="tb" aria-label="Отчет 3"><svg class="ic"><use href="#prn3"/></svg></button>
  <i class="sep"></i>
  <button class="tb" aria-label="Контрагенты"><svg class="ic"><use href="#men"/></svg></button><button class="tb" aria-label="Касса"><svg class="ic"><use href="#money"/></svg></button><button class="tb" aria-label="Кассовый аппарат"><svg class="ic"><use href="#typewriter"/></svg></button>
  <button class="more" aria-label="Еще"><i class="tri"></i></button>
  <i class="grip mid"></i>
  <button class="tb" aria-label="Склад 1"><svg class="ic"><use href="#a1"/></svg></button><button class="tb" aria-label="Склад 2"><svg class="ic"><use href="#a2"/></svg></button><button class="tb" aria-label="Склад 3"><svg class="ic"><use href="#a3"/></svg></button><button class="tb" aria-label="Склад 4"><svg class="ic"><use href="#a4"/></svg></button><button class="tb" aria-label="Склад 5"><svg class="ic"><use href="#a5"/></svg></button><button class="tb" aria-label="Склад 6"><svg class="ic"><use href="#a6"/></svg></button><button class="tb" aria-label="Склад 7"><svg class="ic"><use href="#a7"/></svg></button>
  <i class="sep"></i>
  <button class="tb" aria-label="Документ 1"><svg class="ic"><use href="#d1"/></svg></button><button class="tb" aria-label="Документ 2"><svg class="ic"><use href="#d2"/></svg></button><button class="tb" aria-label="Документ 3"><svg class="ic"><use href="#d3"/></svg></button><button class="tb" aria-label="Документ 4"><svg class="ic"><use href="#d4"/></svg></button><button class="tb" aria-label="Документ 5"><svg class="ic"><use href="#d5"/></svg></button><button class="tb" aria-label="Документ 6"><svg class="ic"><use href="#d6"/></svg></button><button class="tb" aria-label="Документ 7"><svg class="ic"><use href="#d7"/></svg></button><button class="tb" aria-label="Документ 8"><svg class="ic"><use href="#d8"/></svg></button><button class="tb" aria-label="Документ 9"><svg class="ic"><use href="#d9"/></svg></button><button class="tb" aria-label="Документ 10"><svg class="ic"><use href="#d10"/></svg></button><button class="tb" aria-label="Документ 11"><svg class="ic"><use href="#d11"/></svg></button><button class="tb" aria-label="Документ 12"><svg class="ic"><use href="#d12"/></svg></button><button class="tb" aria-label="Документ 13"><svg class="ic"><use href="#d13"/></svg></button><button class="tb" aria-label="Документ 14"><svg class="ic"><use href="#d14"/></svg></button><button class="tb" aria-label="Документ 15"><svg class="ic"><use href="#d15"/></svg></button><button class="tb" aria-label="Документ 16"><svg class="ic"><use href="#d16"/></svg></button><button class="tb" aria-label="Документ 17"><svg class="ic"><use href="#d17"/></svg></button>
  <button class="more" aria-label="Еще"><i class="tri"></i></button>
  <i class="grip mid"></i>
  <button class="tb" aria-label="Итоги 1"><svg class="ic"><use href="#s1"/></svg></button><button class="tb" aria-label="Итоги 2"><svg class="ic"><use href="#s2"/></svg></button><button class="tb" aria-label="Итоги 3"><svg class="ic"><use href="#s3"/></svg></button><button class="tb" aria-label="Итоги 4"><svg class="ic"><use href="#s4"/></svg></button><button class="tb" aria-label="Итоги 5"><svg class="ic"><use href="#s5"/></svg></button><button class="tb" aria-label="Итоги 6"><svg class="ic"><use href="#s6"/></svg></button><button class="tb" aria-label="Итоги 7"><svg class="ic"><use href="#s7"/></svg></button><button class="tb" aria-label="Итоги 8"><svg class="ic"><use href="#s8"/></svg></button>
  <button class="more" aria-label="Еще"><i class="tri"></i></button>
</div>

<div class="placebar"><button class="place"><svg class="ic"><use href="#workplace"/></svg>Рабочее место менеджера по продажам</button></div>

<main class="window">
  <div class="wtitle">
    <svg class="ic"><use href="#grid"/></svg><h2>Номенклатура</h2>
    <button aria-label="Свернуть окно"><i class="dash"></i></button><button aria-label="Восстановить окно"><svg class="x12"><use href="#restore"/></svg></button><button aria-label="Закрыть окно"><svg class="x10"><use href="#cross"/></svg></button>
  </div>
  <div class="toolbar wtools">
    <button class="txt first">Действия<i class="tri"></i></button>
    <i class="sep"></i>
    <button class="tb" aria-label="Добавить"><svg class="ic"><use href="#add"/></svg></button><button class="tb" aria-label="Новая группа"><svg class="ic"><use href="#addfolder"/></svg></button><button class="tb" aria-label="Скопировать"><svg class="ic"><use href="#adddoc"/></svg></button><button class="tb" aria-label="Изменить"><svg class="ic"><use href="#edit"/></svg></button><button class="tb" aria-label="Удалить"><svg class="ic"><use href="#delete"/></svg></button>
    <i class="sep"></i>
    <button class="tb on" aria-label="Иерархия"><svg class="ic"><use href="#hier"/></svg></button><button class="tb" aria-label="Переместить"><svg class="ic"><use href="#move"/></svg></button>
    <i class="sep"></i>
    <button class="tb" aria-label="Отбор"><svg class="ic"><use href="#f1"/></svg></button><button class="tb" aria-label="Отбор по значению"><svg class="ic"><use href="#f2"/></svg></button><button class="tb" aria-label="История отборов"><svg class="ic"><use href="#f3"/></svg></button><i class="tri"></i><button class="tb" aria-label="Отключить отбор"><svg class="ic"><use href="#f4"/></svg></button>
    <i class="sep"></i>
    <button class="tb" aria-label="Обновить"><svg class="ic"><use href="#refresh"/></svg></button>
    <button class="txt">Перейти<i class="tri"></i></button>
    <i class="sep"></i>
    <button class="tb" aria-label="Помощь"><svg class="ic"><use href="#help"/></svg></button>
    <i class="sep"></i>
    <button class="tb" aria-label="Штрихкод"><svg class="ic"><use href="#barcode"/></svg></button>
    <i class="sep"></i>
    <button class="tb" aria-label="Строки"><svg class="ic"><use href="#rows"/></svg></button><button class="tb" aria-label="Свойства"><svg class="ic"><use href="#checks"/></svg></button>
    <i class="sep"></i>
    <button class="txt">Печать<i class="tri"></i></button>
    <i class="sep"></i>
    <button class="txt">Отчеты<i class="tri"></i></button>
  </div>

  <div class="client">
    <div class="field by"><i class="mark"></i><select aria-label="Поле поиска"><option>Наименование</option></select><span class="fb"><i class="tri"></i></span><button class="fb" aria-label="Искать"><svg class="x12"><use href="#lens"/></svg></button></div>
    <div class="search"><label for="contains">содержит:</label><div class="field grow"><input id="contains"><button class="fb" aria-label="Список значений"><i class="tri"></i></button><button class="fb" aria-label="Очистить поиск"><svg class="x8"><use href="#cross"/></svg></button></div></div>

    <div class="box tree">
      <div class="nodes"><svg class="x9"><use href="#plusnode"/></svg><svg class="x14"><use href="#folder"/></svg><span class="node">Номенклатура</span></div>
      <div class="scroll"><button class="sb" aria-label="Вверх"><i class="au"></i></button><i class="thumb"></i><button class="sb" aria-label="Вниз"><i class="ad"></i></button></div>
    </div>

    <div class="box list">
      <div class="view">
      <table>
        <colgroup><col class="w35"><col class="w96"><col class="w71"><col class="w235"><col class="w131"><col class="w134"><col class="w109"><col class="w110"><col class="w146"><col class="w146"><col class="w66"><col class="w146"><col class="w146"><col></colgroup>
        <thead><tr><th></th><th>Код</th><th>Артикул</th><th class="sorted"><span class="sorth">Наименование<svg class="sorti"><use href="#sort"/></svg></span></th><th>Полное наименование</th><th>Вид номенклатуры</th><th>Базовая единица ...</th><th>Единица хранения...</th><th>Номер ГТД</th><th>Страна происхождения</th><th>Ставка Н...</th><th>Номенклатурная группа</th><th>Ценовая группа</th><th>Комментарий</th></tr></thead>
        <tbody>
        <tr class="group"><td class="mk"><svg class="x7"><use href="#up"/></svg><svg class="x14"><use href="#folder"/></svg></td><td>00000000126</td><td></td><td>Мебель</td><td></td><td>Товар</td><td></td><td></td><td></td><td></td><td></td><td></td><td></td><td></td></tr>
        <tr><td class="mk"><svg class="it"><use href="#item"/></svg></td><td>00000000129</td><td>НБ-789000</td><td>Набор кухонной мебели (цвет белый)</td><td>Набор кухонной мебе...</td><td>Набор-комплект</td><td>шт</td><td>шт</td><td></td><td></td><td>18%</td><td></td><td></td><td></td></tr>
        <tr><td class="mk"><svg class="it"><use href="#item"/></svg></td><td>00000000127</td><td></td><td>Стол обеденный</td><td>Стол обеденный</td><td>Товар</td><td>шт</td><td>шт</td><td></td><td></td><td>18%</td><td></td><td></td><td></td></tr>
        <tr><td class="mk"><svg class="it"><use href="#item"/></svg></td><td>00000000141</td><td></td><td>Стул кухонный</td><td>Стул кухонный</td><td>Товар</td><td>шт</td><td>шт</td><td></td><td></td><td>18%</td><td></td><td></td><td></td></tr>
        <tr><td class="mk"><svg class="it"><use href="#item"/></svg></td><td>00000000128</td><td></td><td>Стулья</td><td>Стулья</td><td>Товар</td><td>шт</td><td>шт</td><td></td><td></td><td>18%</td><td></td><td></td><td></td></tr>
        <tr><td class="mk del"><svg class="itd"><use href="#itemdel"/></svg></td><td>00000000146</td><td></td><td class="cur">Табурет</td><td>Табурет</td><td>Товар</td><td>шт</td><td>шт</td><td></td><td></td><td>18%</td><td></td><td></td><td></td></tr>
        </tbody>
      </table>
      </div>
      <div class="scroll"><button class="sb" aria-label="Вверх"><i class="au"></i></button><i class="thumb"></i><button class="sb" aria-label="Вниз"><i class="ad"></i></button></div>
    </div>

    <div class="box picture"></div>

    <section class="stock">
      <h3>Остатки товаров на складах</h3>
      <div class="panes">
        <div class="box prices">
          <div class="view">
          <table>
            <thead><tr><th class="sorted">Типы цен</th></tr></thead>
            <tbody>
            <tr class="sel"><td><label><input type="checkbox">Закупочная</label></td></tr>
            <tr><td><label><input type="checkbox">Плановая</label></td></tr>
            <tr><td><label><input type="checkbox">Розничная</label></td></tr>
            <tr><td><label><input type="checkbox">Оптовая</label></td></tr>
            <tr><td><label><input type="checkbox">Мелкооптовая</label></td></tr>
            <tr><td><label><input type="checkbox">Розничная (по умолчанию)</label></td></tr>
            </tbody>
          </table>
          </div>
          <div class="scroll"><button class="sb off" aria-label="Вверх"><i class="au"></i></button><i class="thumb long"></i><button class="sb" aria-label="Вниз"><i class="ad"></i></button></div>
        </div>
        <div class="right">
          <div class="box rests">
            <table>
              <colgroup><col class="w386"><col class="w222"><col class="w153"><col class="w182"><col class="w174"><col></colgroup>
              <thead><tr><th class="sorted">Характеристика/Склад</th><th>Ячейка склада</th><th>Общий, шт</th><th>Свободный, шт</th><th>Своб.ожид., шт</th><th>В резерве, шт</th></tr></thead>
              <tbody><tr><td colspan="6" class="nochar">&lt;без характеристики&gt;</td></tr></tbody>
            </table>
          </div>
          <div class="currency">
            <label for="pc">Валюта цены:</label>
            <div class="field pc"><select id="pc"><option>В выбранной валюте</option></select><span class="fb"><i class="tri"></i></span></div>
            <label for="cur" class="second">Валюта:</label>
            <div class="field grow"><input id="cur" value="USD"><button class="fb dots" aria-label="Выбрать">...</button><button class="fb" aria-label="Очистить валюту"><svg class="x8"><use href="#cross"/></svg></button></div>
          </div>
        </div>
      </div>
    </section>
  </div>
</main>

<div class="taskbar"><button class="task"><svg class="ic"><use href="#grid"/></svg>Номенклатура</button></div>
<footer class="status"><span class="cell msg">Удаление помеченных на удаление объектов</span><span class="cell cap">CAP</span><span class="cell num">NUM</span></footer>

<div class="overlay">
  <div class="dialog" role="dialog" aria-labelledby="dt">
    <div class="dhead"><h2 id="dt">1С:Предприятие</h2><button aria-label="Закрыть диалог"><svg class="x10"><use href="#cross"/></svg></button></div>
    <div class="dbody">
      <div class="ask"><svg class="q"><use href="#question"/></svg><p>Подготовка к удалению помеченных объектов может занять продолжительное время!<br>Продолжить выполнение операции?</p></div>
      <div class="btns"><button class="btn def">Да</button><button class="btn">Нет</button></div>
    </div>
  </div>
</div>
<svg class="notes" viewBox="0 0 1920 1040" aria-hidden="true">
  <path d="M1214 756L952 564" stroke="#e53a2e" stroke-width="4" stroke-linecap="round"/>
  <path d="M936 551l31 6-13 8-4 14z" fill="#e53a2e"/>
  <text x="1229" y="797" class="step">7</text>
  <text x="13" y="626" class="mark-text">TEKDATA.RU</text>
</svg>
</body>
</html>
```

FILE: styles.css
```css
* { box-sizing: border-box; }

:root {
  --face: #ebe4d9;
  --paper: #fffbf0;
  --line: #b3a984;
  --ink: #3b2e0b;
  --brown: #5e4a12;
  --head: #f4f2dd;
  --head-on: #cfcbb7;
  --sel: #5069c0;
}

body {
  margin: 0;
  height: 100vh;
  display: flex;
  flex-direction: column;
  background: var(--face);
  color: var(--ink);
  font: 11px/13px "Liberation Sans", Arial, sans-serif;
  overflow: hidden;
}

button, input, select { font: inherit; color: inherit; margin: 0; padding: 0; border: 0; border-radius: 0; background: none; }
a { color: inherit; text-decoration: none; }
h1, h2, h3, p { margin: 0; font-size: inherit; }
svg { display: block; flex: none; font-family: "Liberation Sans", Arial, sans-serif; }
.defs { position: absolute; width: 0; height: 0; }

.ic { width: 16px; height: 16px; }
.x7 { width: 6px; height: 7px; }
.x8 { width: 8px; height: 8px; }
.x9 { width: 9px; height: 9px; }
.x10 { width: 10px; height: 10px; }
.x12 { width: 12px; height: 12px; }
.x14 { width: 14px; height: 14px; }

.titlebar {
  display: flex; align-items: center; gap: 2px; flex: none;
  height: 22px; padding: 0 1px 0 2px;
  border-top: 1px solid #4a4a4e;
  background: linear-gradient(#bccadb, #d7e4f2);
}
.titlebar h1 { flex: 1; padding-left: 6px; font: 12px/18px Roboto, "Open Sans", sans-serif; color: #4b4b55; }
.winbtn {
  display: grid; place-items: center;
  width: 31px; height: 17px;
  border: 1px solid #8496b8; border-radius: 2px;
  background: linear-gradient(#c3d0e1, #bccbdd 50%, #cbd8e7);
  box-shadow: inset 0 0 0 1px #d3deeb;
}
.wi { width: 14px; height: 13px; }

.menubar { display: flex; align-items: center; flex: none; height: 24px; margin-bottom: -1px; padding-left: 2px; gap: 9px; }
.menubar .grip { margin-right: 1px; }
.menubar a:nth-of-type(1) { margin-right: 7px; }
.menubar a:nth-of-type(2) { margin-right: 3px; }
.menubar a:nth-of-type(n+6) { margin-right: 3px; }
.menubar a:nth-of-type(8) { margin-right: 7px; }

.grip {
  flex: none; width: 3px; height: 13px; margin: 0 3px 0 1px;
  background: repeating-linear-gradient(#b3a984 0 1px, transparent 1px 2px);
}
.grip.mid { margin: 0 2px 0 6px; }
.toolbar { display: flex; align-items: center; flex: none; height: 26px; padding-left: 2px; }
.tb { display: grid; place-items: center; flex: none; width: 23px; height: 22px; }
.tb.on { border: 1px solid var(--line); background: #f6f1e4; }
.mem { font-weight: 700; color: #7b4a2c; }
.sep { flex: none; width: 2px; height: 18px; margin: 0 2px 0 1px; background: linear-gradient(90deg, #b3a984 50%, #fff 50%); opacity: .7; }
.tri { flex: none; width: 0; height: 0; border: 4px solid transparent; border-top-color: #5b4a16; border-bottom: 0; }
.more { width: 12px; height: 22px; display: grid; place-items: end center; padding-bottom: 3px; }
.more .tri { border-top-color: var(--ink); }

.field { display: flex; align-items: stretch; height: 19px; border: 1px solid var(--line); background: #fff; color: #000; }
.field input, .field select { flex: 1; min-width: 0; padding: 0 2px; outline: 0; appearance: none; }
.fb { display: grid; place-items: center; flex: none; width: 15px; border-left: 1px solid var(--line); background: var(--face); color: #5b4a16; }
.dots { place-items: end center; font-weight: 700; line-height: 15px; }
.quick { width: 150px; }
.grow { flex: 1; }

.placebar { flex: none; height: 24px; padding: 1px; }
.place { display: flex; align-items: center; gap: 2px; height: 21px; width: 232px; padding-left: 2px; border: 1px solid var(--line); }

.window { flex: 1; display: flex; flex-direction: column; min-height: 0; border: solid #6b6b6b; border-width: 2px 1px 1px 2px; border-right-color: #e2e2e2; border-bottom-color: #dcdcdc; background: var(--paper); box-shadow: 0 1px #fff; }
.wtitle { display: flex; align-items: center; flex: none; height: 19px; padding: 0 0 0 1px; border-bottom: 1px solid #757575; background: #b1b1b1; color: #606060; }
.wtitle h2 { flex: 1; padding-left: 4px; font-weight: 700; font-size: 12px; }
.wtitle button { display: grid; place-items: center; width: 20px; height: 16px; color: #606060; }
.dash { width: 8px; height: 2px; margin-top: 8px; background: #606060; }
.wtools { height: 25px; padding-left: 0; border-bottom: 1px solid var(--line); background: var(--face); color: var(--brown); }
.txt { display: flex; align-items: center; gap: 5px; height: 22px; padding: 0 2px 0 3px; }
.txt.first { padding-left: 4px; }
.wtools .tri { border-width: 3px; border-bottom: 0; }

.client {
  flex: 1; min-height: 0; display: grid;
  grid-template-columns: 160px minmax(0, 1fr);
  grid-template-rows: 19px minmax(0, 1fr) 144px;
  gap: 5px 7px; padding: 8px 8px 7px 8px;
}
.by { align-items: center; }
.by select { align-self: stretch; padding-left: 8px; }
.by .fb { height: 17px; }
.mark { width: 8px; height: 4px; margin-left: 6px; border-radius: 1px; background: linear-gradient(#5aa0dc, #1e5c9c); }
.search { display: flex; align-items: center; gap: 7px; }

.box { border: 1px solid var(--line); background: #fff; min-height: 0; min-width: 0; display: flex; }
.tree, .list { margin-bottom: 2px; }
.view { flex: 1; min-width: 0; overflow: hidden; }
.nodes { flex: 1; display: flex; align-items: flex-start; padding-left: 9px; }
.nodes .x9 { margin: 4px 6px 0 0; }
.nodes .x14 { margin: 1px 5px 0 0; }
.node { padding: 3px 2px; background: var(--sel); color: #fff; }
.picture { background: var(--paper); }

.scroll { flex: none; width: 16px; display: flex; flex-direction: column; justify-content: space-between; border-left: 1px solid var(--line); background: #fbfaf5; }
.sb { display: grid; place-items: center; height: 21px; background: linear-gradient(90deg, #fbfaf0, #ece8cf); }
.sb:first-child { border-bottom: 1px solid var(--line); }
.sb:last-child { border-top: 1px solid var(--line); }
.au, .ad { width: 0; height: 0; border: 3px solid transparent; }
.au { border-top: 0; border-bottom: 7px solid #858585; }
.ad { border-bottom: 0; border-top: 7px solid #777; }
.off .au { border-bottom-color: #c9c5b3; }
.thumb { height: 18px; border: solid var(--line); border-width: 1px 0; background: radial-gradient(circle, #d6d0b4 0 1px, transparent 3px), linear-gradient(90deg, #fbfaf0, #ece8cf); }
.thumb.long { height: 65px; margin-bottom: auto; border-top: 0; }

table { width: 100%; table-layout: fixed; border-collapse: separate; border-spacing: 0; }
th, td { padding: 0 4px; border-right: 1px solid var(--line); border-bottom: 1px solid var(--line); overflow: hidden; white-space: nowrap; text-align: left; }
th { height: 21px; background: var(--head); color: var(--brown); font-weight: 400; }
td { height: 19px; color: #000; }
th.sorted { background: var(--head-on); color: var(--ink); }
th:last-child, td:last-child { border-right: 0; }
.list th:nth-child(7), .list th:nth-child(8) { padding-right: 0; }
.sorth { display: flex; align-items: center; justify-content: space-between; padding-right: 2px; }
.sorti { width: 12px; height: 8px; }
.group td { background: var(--face); color: var(--brown); }
td.cur { background: var(--sel); color: #fff; outline: 1px dotted #c8b040; outline-offset: -1px; }
.mk svg { display: inline-block; vertical-align: middle; }
td.mk { text-align: right; line-height: 14px; padding: 0 4px 0 0; }
.mk .x7 { margin: 0 5px 4px 0; }
td.mk .x14 { margin-right: -2px; }
.it { width: 10px; height: 5px; }
.itd { width: 14px; height: 10px; }
td.mk.del { padding-right: 1px; }

.w35 { width: 35px; } .w96 { width: 96px; } .w71 { width: 71px; } .w235 { width: 235px; }
.w131 { width: 131px; } .w134 { width: 134px; } .w109 { width: 109px; } .w110 { width: 110px; }
.w146 { width: 146px; } .w66 { width: 66px; }
.w386 { width: 385px; } .w222 { width: 222px; } .w153 { width: 153px; } .w182 { width: 182px; } .w174 { width: 174px; }

.stock { display: flex; flex-direction: column; gap: 5px; min-width: 0; }
.stock h3 { height: 15px; border-bottom: 1px solid var(--line); color: #a06a00; font-weight: 700; font-size: 12px; }
.panes { flex: 1; display: flex; gap: 7px; min-height: 0; }
.prices { flex: 0 0 416px; }
.prices label { display: flex; align-items: center; gap: 1px; }
.prices input { appearance: none; flex: none; width: 13px; height: 13px; border: 1px solid var(--line); background: #fff; }
.sel td { background: var(--sel); color: #fff; }
.right { flex: 1; min-width: 0; display: flex; flex-direction: column; gap: 4px; }
.rests { flex: 1; display: block; }
.rests td { border: 0; background: var(--paper); }
td.nochar { padding-left: 25px; }
.currency { display: flex; align-items: center; gap: 5px; }
.currency .second { padding: 0 3px 0 2px; }
.pc { flex: 0 0 694px; }

.taskbar { flex: none; height: 24px; padding: 2px 1px; }
.task { display: flex; align-items: center; gap: 1px; width: 172px; height: 20px; padding-left: 1px; border: 1px solid var(--line); background: #b1cbe5; }
.status { flex: none; display: flex; gap: 5px; height: 20px; }
.cell { height: 19px; padding: 2px; border: 1px solid #cfc8bb; }
.msg { flex: 1; padding-left: 3px; }
.cap { width: 29px; color: #a39a78; }
.num { width: 33px; }

.overlay { position: fixed; inset: 0; display: grid; place-items: center; padding-top: 2px; }
.dialog { width: 513px; height: 118px; border: solid #9a9a9a; border-width: 0 1px 1px; background: #ccc; }
.dhead { display: flex; align-items: center; justify-content: space-between; height: 20px; padding: 0 7px 0 6px; }
.dhead h2 { font-size: 12px; }
.dhead button { color: #7b7b7b; }
.dbody { height: 96px; margin: 0 1px; padding: 16px 10px 0; border: 1px solid #6f6f6f; background: var(--paper); }
.ask { display: flex; gap: 12px; height: 42px; }
.q { width: 30px; height: 30px; }
.ask p { padding-top: 1px; white-space: nowrap; }
.btns { display: flex; justify-content: center; gap: 7px; padding-right: 2px; }
.btn { width: 94px; height: 23px; border: 1px solid var(--line); background: linear-gradient(#f2ede4, #e6dfd2); box-shadow: inset -1px -1px #d6cdb8; color: var(--brown); }
.def { border-color: #8a8672; outline: 1px dotted #111; outline-offset: -3px; }

.notes { position: fixed; inset: 0; width: 100%; height: 100%; pointer-events: none; }
.step { font-size: 63px; fill: #e53a2e; }
.mark-text { font-size: 305px; fill: rgba(0, 0, 255, .09); }
```
